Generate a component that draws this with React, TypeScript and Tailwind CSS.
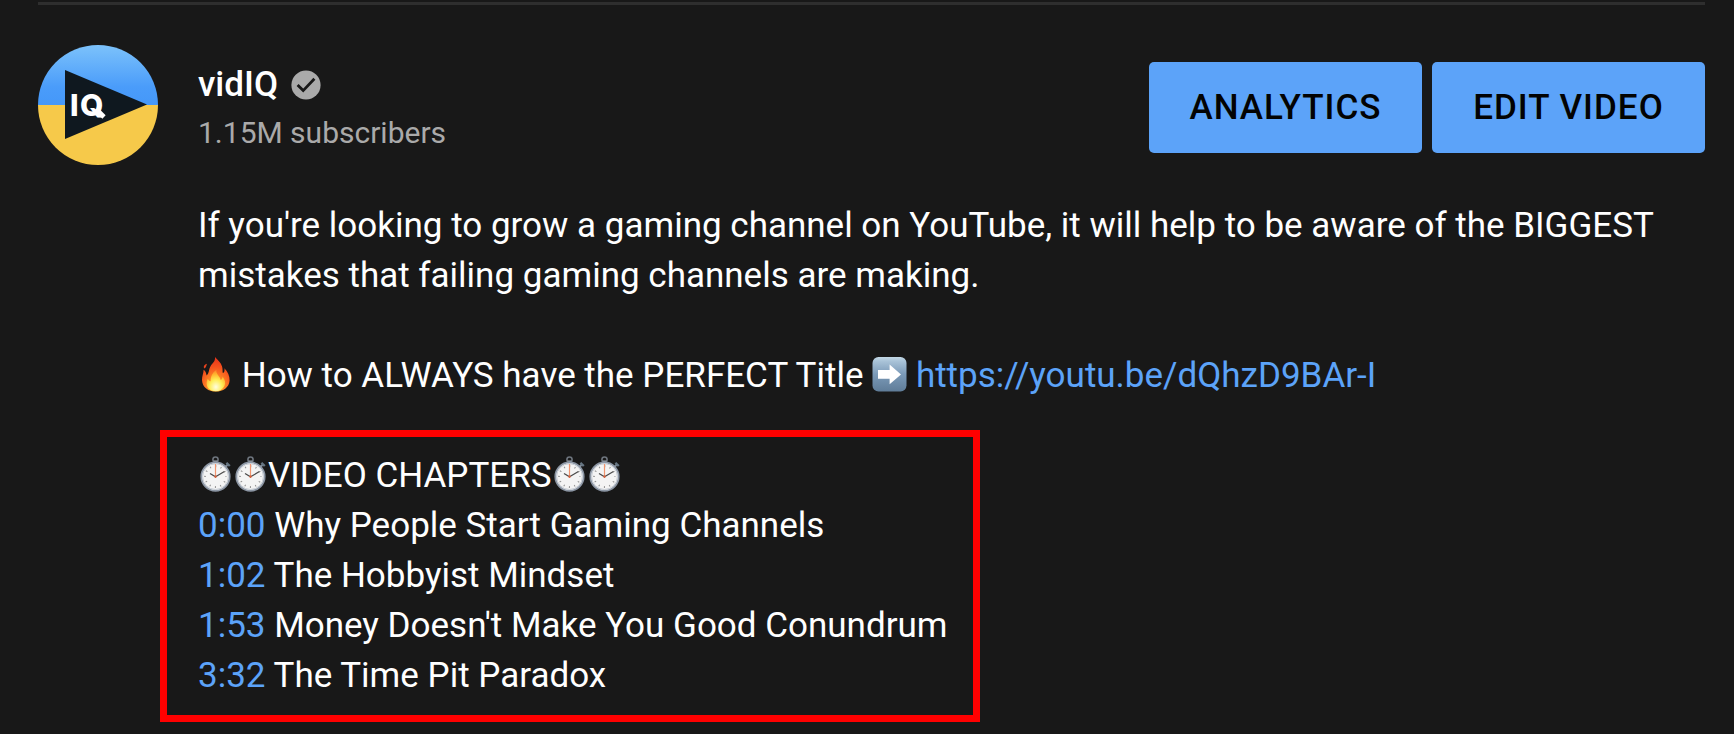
import type { ReactNode } from "react";

const chapters = [
  { time: "0:00", title: "Why People Start Gaming Channels" },
  { time: "1:02", title: "The Hobbyist Mindset" },
  { time: "1:53", title: "Money Doesn't Make You Good Conundrum" },
  { time: "3:32", title: "The Time Pit Paradox" },
];

const ChannelLogo = () => (
  <svg viewBox="0 0 120 120" className="size-[120px] shrink-0 rounded-full" role="img" aria-label="vidIQ channel">
    <defs>
      <linearGradient id="sky" x1="0" y1="0" x2="0" y2="1">
        <stop offset="0" stopColor="#7cc2fb" />
        <stop offset="0.7" stopColor="#4a9cfa" />
        <stop offset="1" stopColor="#4598f9" />
      </linearGradient>
    </defs>
    <rect width="120" height="60" fill="url(#sky)" />
    <rect y="60" width="120" height="60" fill="#f6c94a" />
    <path d="M27 25 L109 59.5 L27 94 Z" fill="#0f181f" />
    <text x="32 42" y="70.5" fill="#fff" fontSize="30" fontWeight="800" fontFamily="Inter, sans-serif">
      IQ
    </text>
    {/* long diagonal tail of the Q */}
    <path d="M59 65 L66 72" stroke="#fff" strokeWidth="4.6" />
  </svg>
);

const VerifiedBadge = () => (
  <svg viewBox="0 0 30 30" className="size-[30px]" role="img" aria-label="Verified">
    <circle cx="15" cy="15" r="14.6" fill="#aaaaaa" />
    <path d="M6.6 15 L12.2 20.6 L23.4 8.8" fill="none" stroke="#181818" strokeWidth="2.8" />
  </svg>
);

const Fire = () => (
  <svg viewBox="0 0 35 36" className="inline-block h-9 w-[35px] align-[-5px]" role="img" aria-label="fire">
    <defs>
      <radialGradient id="flame" cx="0.5" cy="0.88" r="0.85">
        <stop offset="0" stopColor="#ffc53b" />
        <stop offset="0.35" stopColor="#fd8a26" />
        <stop offset="0.7" stopColor="#f6521d" />
        <stop offset="1" stopColor="#e8341a" />
      </radialGradient>
      <radialGradient id="core" cx="0.5" cy="0.8" r="0.75">
        <stop offset="0" stopColor="#fffde0" />
        <stop offset="0.45" stopColor="#ffee58" />
        <stop offset="0.8" stopColor="#ffb52e" />
        <stop offset="1" stopColor="#fd8f2c" />
      </radialGradient>
    </defs>
    <path
      d="M17 1 C18.5 3 23 6 24.2 11 C24.8 13.5 24.4 15.6 24.8 17 C26.6 16.6 26.8 14 26.4 12.2 C29.8 15.5 31.8 20 31.6 24.5 C31.2 31.5 25 35.6 17.8 35.6 C10.5 35.6 4.2 31.4 4 24 C3.9 20 5.6 17.4 5.6 13.8 C7.4 15 8.2 17 8.6 19.4 C11.4 16.8 10.6 13.4 12.4 10.4 C14 7.6 17.6 5.4 17 1 Z"
      fill="url(#flame)"
    />
    <path d="M6.2 12.6 C5 10.5 6.2 8.6 9 7.8 C8.4 9.6 8.2 11.6 6.2 12.6 Z" fill="#e8431d" />
    <path
      d="M18.4 14 C17.6 18 22.4 20.6 22.6 24 C24 23.6 24.6 22 24.6 20.6 C27 24 28 27 26.4 30 C24.6 33.6 21.5 35.2 17.6 35.2 C13 35.2 9.6 33 8.8 29 C8.4 26.4 9 24.4 9.8 22.8 C10.6 24.4 11.4 25 12.6 25.2 C12.6 20.6 14.4 16.4 18.4 14 Z"
      fill="url(#core)"
    />
  </svg>
);

const RightArrow = () => (
  <svg viewBox="0 0 35 36" className="inline-block h-9 w-[35px] align-[-5px]" role="img" aria-label="right arrow">
    <defs>
      <linearGradient id="tile" x1="0" y1="0" x2="0" y2="1">
        <stop offset="0" stopColor="#c3d8e6" />
        <stop offset="0.12" stopColor="#a9c3d8" />
        <stop offset="0.5" stopColor="#7b9ab8" />
        <stop offset="1" stopColor="#5f7c98" />
      </linearGradient>
    </defs>
    <rect x="0.5" y="1" width="34" height="34.5" rx="6" fill="url(#tile)" />
    <path d="M6 14 H17.6 V8.6 L29 18.4 L17.6 28.2 V22.8 H6 Z" fill="#fff" />
  </svg>
);

const Stopwatch = () => (
  <svg viewBox="0 0 35 36" className="inline-block h-9 w-[35px] align-[-5px]" role="img" aria-label="stopwatch">
    <circle cx="17.5" cy="3.6" r="2.6" fill="none" stroke="#6d747d" strokeWidth="1.6" />
    <rect x="15.6" y="4.4" width="3.8" height="3" fill="#8a929b" />
    <path d="M27.2 11 L30 8.4" stroke="#7d8995" strokeWidth="2" />
    <path d="M28.4 6.8 L31.8 10" stroke="#667582" strokeWidth="2.4" />
    <circle cx="17.5" cy="20.6" r="14.2" fill="#f4f4f4" stroke="#8c96a4" strokeWidth="1.8" />
    <circle cx="17.5" cy="20.6" r="12.9" fill="none" stroke="#c6ccd4" strokeWidth="1" />
    <circle cx="17.5" cy="20.6" r="10.4" fill="none" stroke="#8f8f8f" strokeWidth="1.8" strokeDasharray="1 4.445" strokeDashoffset="0.5" />
    <path d="M17.5 8 V22" stroke="#f0956f" strokeWidth="1.2" />
    <path d="M12 17.4 L17.5 20.8 L26.4 15.6" fill="none" stroke="#4a4a4a" strokeWidth="1.2" />
    <circle cx="17.5" cy="20.6" r="1.2" fill="#d8603c" />
  </svg>
);

const ActionButton = ({ children }: { children: ReactNode }) => (
  <button
    type="button"
    className="h-[91px] w-[273px] rounded-[5px] bg-[#5ca3f9] text-[35px] leading-10 font-medium tracking-[1px] text-[#030303] uppercase"
  >
    {children}
  </button>
);

export default function App() {
  return (
    <main className="min-h-screen bg-[#181818] pt-[2px] pr-[29px] pb-[11px] pl-[38px] font-['Roboto',sans-serif] text-white">
      <hr className="border-t-[3px] border-[#2e2e2e]" />

      <header className="mt-10 flex items-start justify-between">
        <div className="flex gap-10">
          <ChannelLogo />
          <div className="pt-[15px]">
            <div className="flex items-center gap-[13px]">
              <h1 className="text-[35px] leading-[50px] font-medium">vidIQ</h1>
              <VerifiedBadge />
            </div>
            <p className="text-[30px] leading-[45px] text-[#aaaaaa]">1.15M subscribers</p>
          </div>
        </div>
        <div className="mt-[17px] flex gap-[10px]">
          <ActionButton>Analytics</ActionButton>
          <ActionButton>Edit video</ActionButton>
        </div>
      </header>

      <div className="mt-9 pl-[160px] text-[35px] leading-[50px]">
        <p>
          If you're looking to grow a gaming channel on YouTube, it will help to be aware of the BIGGEST mistakes that
          failing gaming channels are making.
        </p>
        <p className="mt-[50px]">
          <Fire /> How to ALWAYS have the PERFECT Title <RightArrow />{" "}
          <a href="https://youtu.be/dQhzD9BAr-I" className="text-[#5ca3f9]">
            https://youtu.be/dQhzD9BAr-I
          </a>
        </p>

        <section className="mt-[29px] -ml-[38px] w-fit border-[7px] border-[#ff0000] pt-[14px] pr-[25px] pb-[14px] pl-[31px]">
          <h2>
            <Stopwatch />
            <Stopwatch />
            VIDEO CHAPTERS
            <Stopwatch />
            <Stopwatch />
          </h2>
          <ul>
            {chapters.map((chapter) => (
              <li key={chapter.time}>
                <a href="#" className="text-[#5ca3f9]">
                  {chapter.time}
                </a>{" "}
                {chapter.title}
              </li>
            ))}
          </ul>
        </section>
      </div>
    </main>
  );
}
